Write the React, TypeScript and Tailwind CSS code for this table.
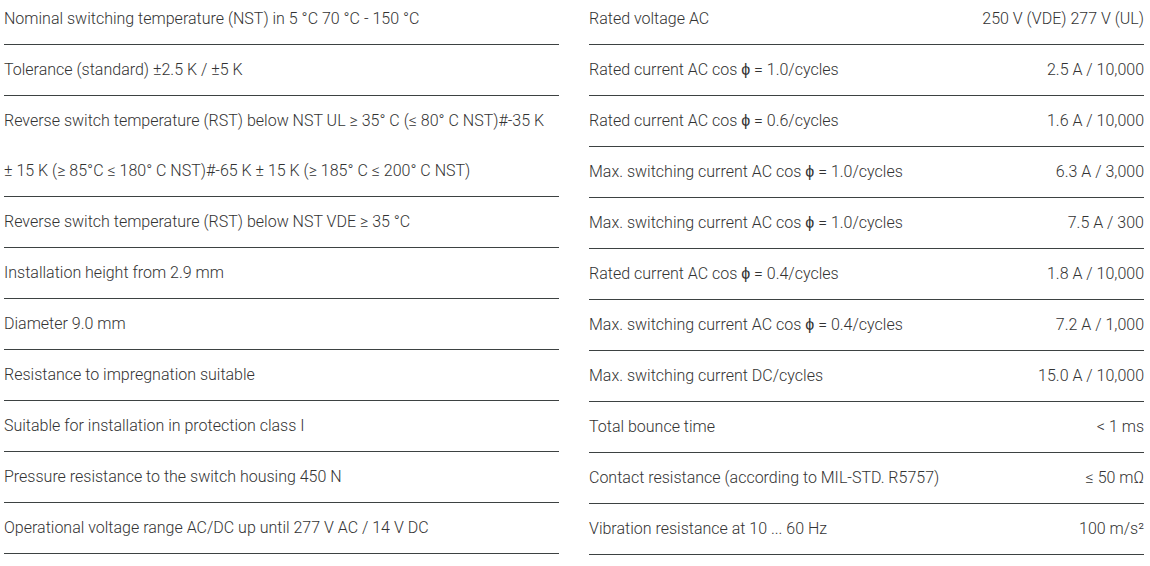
const left: string[][] = [
  ["Nominal switching temperature (NST) in 5 °C 70 °C - 150 °C"],
  ["Tolerance (standard) ±2.5 K / ±5 K"],
  [
    "Reverse switch temperature (RST) below NST UL ≥ 35° C (≤ 80° C NST)#-35 K",
    "± 15 K (≥ 85°C ≤ 180° C NST)#-65 K ± 15 K (≥ 185° C ≤ 200° C NST)",
  ],
  ["Reverse switch temperature (RST) below NST VDE ≥ 35 °C"],
  ["Installation height from 2.9 mm"],
  ["Diameter 9.0 mm"],
  ["Resistance to impregnation suitable"],
  ["Suitable for installation in protection class I"],
  ["Pressure resistance to the switch housing 450 N"],
  ["Operational voltage range AC/DC up until 277 V AC / 14 V DC"],
];

const right: [string, string][] = [
  ["Rated voltage AC", "250 V (VDE) 277 V (UL)"],
  ["Rated current AC cos ϕ = 1.0/cycles", "2.5 A / 10,000"],
  ["Rated current AC cos ϕ = 0.6/cycles", "1.6 A / 10,000"],
  ["Max. switching current AC cos ϕ = 1.0/cycles", "6.3 A / 3,000"],
  ["Max. switching current AC cos ϕ = 1.0/cycles", "7.5 A / 300"],
  ["Rated current AC cos ϕ = 0.4/cycles", "1.8 A / 10,000"],
  ["Max. switching current AC cos ϕ = 0.4/cycles", "7.2 A / 1,000"],
  ["Max. switching current DC/cycles", "15.0 A / 10,000"],
  ["Total bounce time", "< 1 ms"],
  ["Contact resistance (according to MIL-STD. R5757)", "≤ 50 mΩ"],
  ["Vibration resistance at 10 ... 60 Hz", "100 m/s²"],
];

export default function App() {
  return (
    <div className="h-[566px] w-[1150px] overflow-hidden bg-white font-['Roboto',sans-serif] text-[16px] font-light text-[#333]">
      <div className="-mt-[6px] grid grid-cols-2 items-start gap-[30px] pl-[4px] pr-[6px]">
        <div className="flex flex-col">
          {left.map((lines, i) => (
            <div key={i} className="border-b border-[#3d4242]">
              {lines.map((t, j) => (
                <div key={j} className="flex h-[50px] items-center whitespace-nowrap">
                  {t}
                </div>
              ))}
            </div>
          ))}
        </div>
        <div className="flex flex-col">
          {right.map(([label, value], i) => (
            <div
              key={i}
              className="flex h-[51px] items-center justify-between border-b border-[#3d4242] whitespace-nowrap"
            >
              <span>{label}</span>
              <span>{value}</span>
            </div>
          ))}
        </div>
      </div>
    </div>
  );
}
